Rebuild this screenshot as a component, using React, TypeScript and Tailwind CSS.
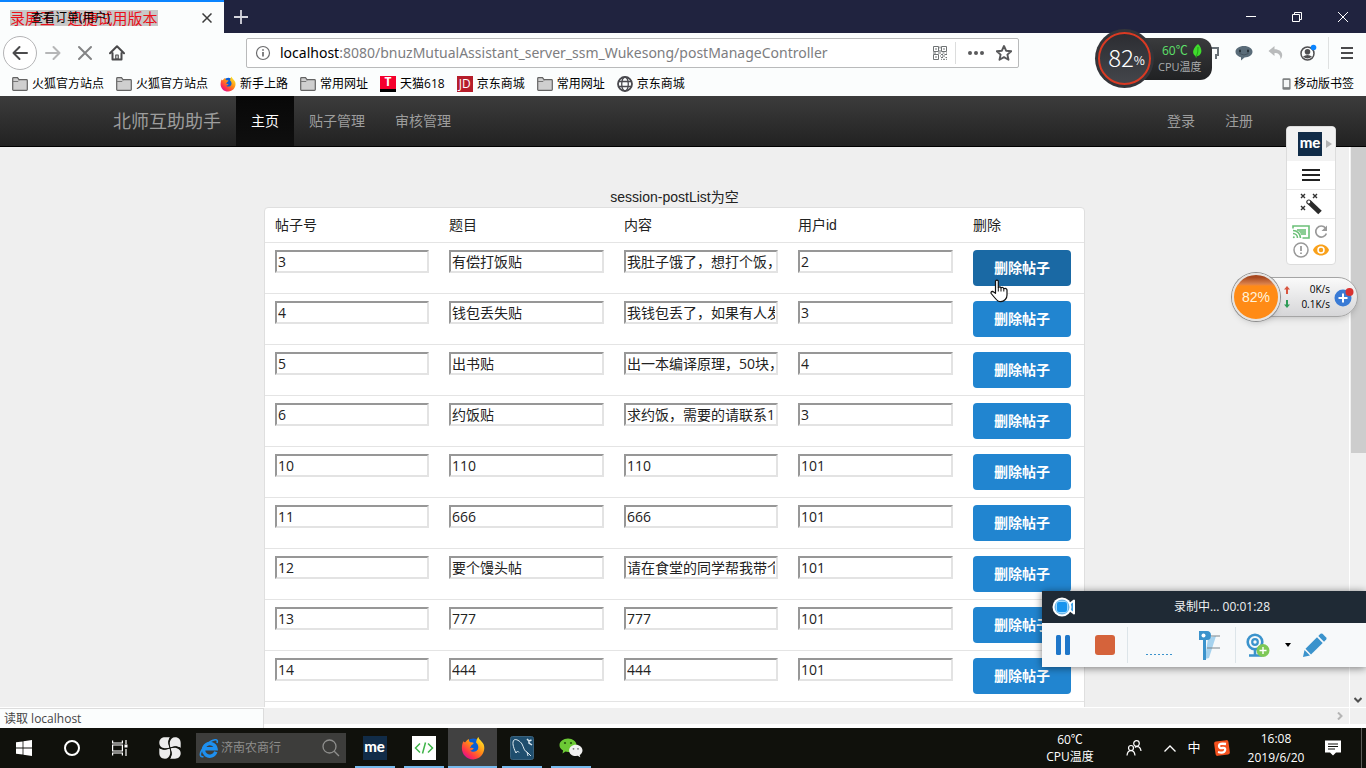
import type { ReactNode } from "react";

type Post = {
  id: string;
  title: string;
  content: string;
  userId: string;
};

const posts: Post[] = [
  { id: "3", title: "有偿打饭贴", content: "我肚子饿了，想打个饭，", userId: "2" },
  { id: "4", title: "钱包丢失贴", content: "我钱包丢了，如果有人发", userId: "3" },
  { id: "5", title: "出书贴", content: "出一本编译原理，50块，", userId: "4" },
  { id: "6", title: "约饭贴", content: "求约饭，需要的请联系1", userId: "3" },
  { id: "10", title: "110", content: "110", userId: "101" },
  { id: "11", title: "666", content: "666", userId: "101" },
  { id: "12", title: "要个馒头帖", content: "请在食堂的同学帮我带个", userId: "101" },
  { id: "13", title: "777", content: "777", userId: "101" },
  { id: "14", title: "444", content: "444", userId: "101" },
];

const bookmarks = [
  { icon: "folder", label: "火狐官方站点" },
  { icon: "folder", label: "火狐官方站点" },
  { icon: "firefox", label: "新手上路" },
  { icon: "folder", label: "常用网址" },
  { icon: "tmall", label: "天猫618" },
  { icon: "jd", label: "京东商城" },
  { icon: "folder", label: "常用网址" },
  { icon: "globe", label: "京东商城" },
];

function FirefoxIcon({ className }: { className: string }) {
  return (
    <svg viewBox="0 0 24 24" className={className} aria-hidden>
      <defs>
        <linearGradient id="fox" x1="0.85" y1="0.1" x2="0.2" y2="0.9">
          <stop offset="0" stopColor="#ffe226" />
          <stop offset="0.45" stopColor="#ff8a16" />
          <stop offset="0.8" stopColor="#ff3647" />
          <stop offset="1" stopColor="#e31587" />
        </linearGradient>
      </defs>
      <circle cx="12.5" cy="11" r="8.5" fill="#0a5fd6" />
      <path
        d="M2.3 5.2C3 6 3.600 6.200 4.300 6.300C5.200 4.600 6.600 3.600 8 3C7.700 4.400 8.300 5.700 9.500 6.300C10.800 6.500 12 6.400 12.600 6.900C12.700 8 11.300 8.600 10.300 9.200C10.300 10.500 9.200 10.800 8.700 12.200C10.300 11.400 12 11.800 13 12.800C11.600 13 11.200 14.800 9.200 14.600C11.500 17 17 16 17.300 11.500C17.400 9.500 16.400 7.700 15 6.600C15.300 4.300 16.300 2.300 17.500 0.800C17.300 3.200 21 5 22.700 8.600C25 15 20.500 23.400 12.300 23.400C5.500 23.400 0.800 18 0.900 12C0.900 9.300 1.500 7 2.300 5.200Z"
        fill="url(#fox)"
      />
    </svg>
  );
}

function MeLogo() {
  return (
    <span className="flex size-6 items-center justify-center bg-[#112c48] pb-1 font-[Lato,sans-serif] text-[15px] leading-none font-black text-white">
      me
    </span>
  );
}

function BookmarkIcon({ name }: { name: string }) {
  if (name === "firefox") return <FirefoxIcon className="size-4" />;
  if (name === "tmall") {
    return (
      <span className="flex size-4 items-center justify-center border-b-3 border-black bg-[#f5002d] text-xs leading-none font-bold text-white">
        T
      </span>
    );
  }
  if (name === "jd") {
    return (
      <span className="flex size-4 items-center justify-center bg-[#b61d2a] text-xs leading-none text-white">
        JD
      </span>
    );
  }
  if (name === "globe") {
    return (
      <svg viewBox="0 0 16 16" className="size-4" fill="none" stroke="#4a4a4f" strokeWidth="1.3" aria-hidden>
        <circle cx="8" cy="8" r="7" strokeWidth="1.8" />
        <ellipse cx="8" cy="8" rx="3.300" ry="7" />
        <path d="M1.500 5.500h13M1.500 10.500h13" />
      </svg>
    );
  }
  return (
    <svg viewBox="0 0 16 16" className="size-4" aria-hidden>
      <path
        d="M0.700 13.500V2.500Q0.700 1.700 1.500 1.700H5.500L7 3.700H14.500Q15.300 3.700 15.300 4.500V13.500Q15.300 14.300 14.500 14.300H1.500Q0.700 14.300 0.700 13.500Z"
        fill="#cfcfcf"
        stroke="#636363"
        strokeWidth="1.200"
      />
      <path d="M1 5.500H6L7 4.500" stroke="#777" fill="none" />
    </svg>
  );
}

function TitleBar() {
  return (
    <header className="flex h-[33px] shrink-0 bg-[#20233f]">
      <div className="relative flex w-56 items-center border-t-2 border-[#0a84ff] bg-[#fbfdfd] text-xs">
        <span className="absolute top-2 left-2.5 bg-[#c8c8c8] text-[15px] leading-4 whitespace-nowrap text-[#e8101a]">
          录屏王 - 迅捷试用版本
        </span>
        <span className="relative ml-[31px] text-black">查看订单(用户)</span>
        <button aria-label="关闭标签页" className="mr-3 ml-auto">
          <svg viewBox="0 0 10 10" className="size-2.5" stroke="#3c3c3c" strokeWidth="1.500" aria-hidden>
            <path d="M0.500 0.500L9.500 9.500M9.500 0.500L0.500 9.500" />
          </svg>
        </button>
      </div>
      <button aria-label="新标签页" className="ml-2.5">
        <svg viewBox="0 0 14 14" className="size-3.5" stroke="#d5d6de" strokeWidth="1.800" aria-hidden>
          <path d="M7 0V14M0 7H14" />
        </svg>
      </button>
      <div className="ml-auto flex">
        <button aria-label="最小化" className="flex w-[46px] items-center justify-center">
          <svg viewBox="0 0 10 10" className="size-2.5" stroke="#fff" aria-hidden>
            <path d="M0 4.500H10" />
          </svg>
        </button>
        <button aria-label="还原" className="flex w-[46px] items-center justify-center">
          <svg viewBox="0 0 10 10" className="size-2.5" fill="none" stroke="#fff" aria-hidden>
            <path d="M0.500 2.500H7.500V9.500H0.500ZM2.500 2.500V0.500H9.500V7.500H7.500" />
          </svg>
        </button>
        <button aria-label="关闭" className="flex w-[46px] items-center justify-center">
          <svg viewBox="0 0 10 10" className="size-2.5" stroke="#fff" aria-hidden>
            <path d="M0 0L10 10M10 0L0 10" />
          </svg>
        </button>
      </div>
    </header>
  );
}

function ToolButton({ label, children }: { label: string; children: ReactNode }) {
  return (
    <button aria-label={label} className="flex h-8 w-8 shrink-0 items-center justify-center">
      {children}
    </button>
  );
}

function Toolbar() {
  return (
    <div className="flex h-10 shrink-0 items-center bg-[#fbfdfd]">
      <button
        aria-label="后退"
        className="ml-[3px] flex size-[34px] items-center justify-center rounded-full border border-[#b4b4b6] bg-white"
      >
        <svg viewBox="0 0 16 16" className="size-4" fill="none" stroke="#4a4a4c" strokeWidth="2" strokeLinecap="round" strokeLinejoin="round" aria-hidden>
          <path d="M15 8H1.500M7.500 2L1.500 8L7.500 14" />
        </svg>
      </button>
      <ToolButton label="前进">
        <svg viewBox="0 0 16 16" className="size-4" fill="none" stroke="#b5b6b7" strokeWidth="2" strokeLinecap="round" strokeLinejoin="round" aria-hidden>
          <path d="M1 8H14.500M8.500 2L14.500 8L8.500 14" />
        </svg>
      </ToolButton>
      <ToolButton label="停止">
        <svg viewBox="0 0 16 16" className="size-4" fill="none" stroke="#838485" strokeWidth="2" strokeLinecap="round" aria-hidden>
          <path d="M2 2L14 14M14 2L2 14" />
        </svg>
      </ToolButton>
      <ToolButton label="主页">
        <svg viewBox="0 0 16 16" className="size-4" fill="none" stroke="#4a4a4c" strokeWidth="2" strokeLinecap="round" strokeLinejoin="round" aria-hidden>
          <path d="M1 8.300L8 1.300L15 8.300M3.500 8V14.500H12.500V8" />
          <path d="M6.800 14V10H9.200V14Z" strokeWidth="1.200" />
        </svg>
      </ToolButton>
      <div className="mr-[177px] ml-[113px] flex h-[30px] min-w-0 flex-1 items-center rounded-[2px] border border-[#b9babb] bg-white">
        <svg viewBox="0 0 16 16" className="ml-2 size-4 shrink-0" fill="none" stroke="#6b6b6d" strokeWidth="1.200" aria-hidden>
          <circle cx="8" cy="8" r="6.500" />
          <path d="M8 7V11.500M8 4.300V5.800" strokeWidth="1.700" />
        </svg>
        <p className="ml-[9px] truncate font-['Noto_Sans',sans-serif] text-sm text-[#7d7d7f]">
          <span className="text-black">localhost</span>
          :8080/bnuzMutualAssistant_server_ssm_Wukesong/postManageController
        </p>
        <svg viewBox="0 0 14 14" className="ml-auto size-3.5 shrink-0" fill="none" stroke="#6f7374" aria-hidden>
          <path d="M0.500 0.500h5v5h-5zM8.500 0.500h5v5h-5zM0.500 8.500h5v5h-5z" />
          <path d="M2 3h2M10 3h2M2 11h2M7 0.500v2M7 4v2M0 7h3M5 7h3M9.500 7h2M13 7h1M8 8.500h2M11.500 8.500h2.500M9 10h3M8 11.500h2M12.500 11.500h1.500M10 13.300h2M13 13.300h1M7.500 9.500v1M8 13.300h1" />
        </svg>
        <span className="ml-2 h-[22px] w-px bg-[#dcdddd]" />
        <button aria-label="页面操作" className="ml-3 shrink-0">
          <svg viewBox="0 0 16 4" className="h-1 w-4" fill="#5a5a5c" aria-hidden>
            <circle cx="2" cy="2" r="2" />
            <circle cx="8" cy="2" r="2" />
            <circle cx="14" cy="2" r="2" />
          </svg>
        </button>
        <button aria-label="为此页添加书签" className="mr-1.5 ml-3 shrink-0">
          <svg viewBox="0 0 16 16" className="size-4" fill="none" stroke="#58585a" strokeWidth="1.900" strokeLinejoin="round" aria-hidden>
            <path d="M8 1L10.100 5.700L15.200 6.200L11.400 9.600L12.500 14.700L8 12.100L3.500 14.700L4.600 9.600L0.800 6.200L5.900 5.700Z" />
          </svg>
        </button>
      </div>
      <ToolButton label="截图">
        <svg viewBox="0 0 16 16" className="size-4" fill="none" stroke="#6a7278" strokeWidth="2" aria-hidden>
          <path d="M4 3H14V10M11 10H15M12 10V14" />
        </svg>
      </ToolButton>
      <ToolButton label="微信">
        <svg viewBox="0 0 18 16" className="h-4 w-[18px]" aria-hidden>
          <path d="M9 1c4.800 0 8.500 2.500 8.500 5.800s-3.500 5.700-8 5.700L6 15.500v-3.200C3 11.500 0.500 9.500 0.500 6.800C0.500 3.500 4.200 1 9 1z" fill="#5a6c79" />
          <path d="M5 5.500v1M13 5.500v1" fill="none" stroke="#27323a" strokeWidth="2" strokeLinecap="round" />
          <path d="M4.500 8.500Q9 11.500 13.500 8.500" fill="none" stroke="#44535e" />
        </svg>
      </ToolButton>
      <ToolButton label="撤销">
        <svg viewBox="0 0 16 16" className="size-4" fill="#b9bbbc" aria-hidden>
          <path d="M6.500 1L0.500 6L6.500 11V8C10.500 8 12.500 9.500 12.500 14.500C16.500 9 13 4.200 6.500 4.200Z" />
        </svg>
      </ToolButton>
      <ToolButton label="账户">
        <svg viewBox="0 0 18 18" className="size-[18px]" aria-hidden>
          <circle cx="8.500" cy="9.500" r="6.500" fill="none" stroke="#4f4f51" strokeWidth="1.500" />
          <circle cx="8.500" cy="7.800" r="2.800" fill="#4f4f51" />
          <path d="M4 12.500Q8.500 9.500 13 12.500Q8.500 16.500 4 12.500Z" fill="#4f4f51" />
          <circle cx="14.500" cy="3.500" r="2.800" fill="#0a84ff" />
        </svg>
      </ToolButton>
      <div className="ml-1 flex h-8 w-[38px] shrink-0 items-center border-l border-[#dfe1e1] pl-3">
        <button aria-label="打开菜单">
          <svg viewBox="0 0 12 12" className="size-3" stroke="#4a4a4c" strokeWidth="2" aria-hidden>
            <path d="M0 1H12M0 6H12M0 11H12" />
          </svg>
        </button>
      </div>
    </div>
  );
}

function BookmarkBar() {
  return (
    <div className="flex h-[23px] shrink-0 items-center gap-3 bg-[#fbfdfd] px-3 pb-0.5 text-xs text-black">
      {bookmarks.map((b, i) => (
        <a key={i} href="#" className="flex shrink-0 items-center gap-1">
          <BookmarkIcon name={b.icon} />
          {b.label}
        </a>
      ))}
      <a href="#" className="ml-auto flex shrink-0 items-center gap-[3px]">
        <svg viewBox="0 0 10 14" className="h-3.5 w-[9px]" aria-hidden>
          <rect x="0.500" y="0.500" width="9" height="13" rx="1.500" fill="#7c7f80" />
          <path d="M2 2.500H8V10.500H2Z" fill="#f4f6f6" />
        </svg>
        移动版书签
      </a>
    </div>
  );
}

function SiteNav() {
  return (
    <nav className="h-[51px] shrink-0 border-b border-black bg-linear-to-b from-[#3c3c3c] to-[#222] text-sm text-[#9d9d9d]">
      <div className="mx-auto flex h-full max-w-[1170px] items-stretch">
        <a href="#" className="flex items-center px-[15px] text-lg">
          北师互助助手
        </a>
        <a href="#" className="flex items-center bg-linear-to-b from-[#080808] to-[#0f0f0f] px-[15px] text-white">
          主页
        </a>
        <a href="#" className="flex items-center px-[15px]">贴子管理</a>
        <a href="#" className="flex items-center px-[15px]">审核管理</a>
        <a href="#" className="ml-auto flex items-center px-[15px]">登录</a>
        <a href="#" className="flex items-center px-[15px]">注册</a>
      </div>
    </nav>
  );
}

function PostInput({ label, value }: { label: string; value: string }) {
  return (
    <input
      type="text"
      aria-label={label}
      defaultValue={value}
      className="block h-[23px] w-full border-2 border-t-[#979797] border-r-[#e3e3e3] border-b-[#e3e3e3] border-l-[#979797] bg-white px-px font-['Open_Sans','Noto_Sans_CJK_SC',sans-serif] text-sm leading-none text-[#222]"
    />
  );
}

function PostTable() {
  return (
    <div className="mx-auto w-full max-w-[821px] rounded border border-[#dfdfdf] bg-white pb-5">
      <table className="w-full table-fixed text-left text-sm text-[#222]">
        <thead>
          <tr className="h-[34px] border-b border-[#e4e4e4]">
            <th className="w-[174px] px-2.5 font-normal">帖子号</th>
            <th className="w-[175px] px-2.5 font-normal">题目</th>
            <th className="w-[174px] px-2.5 font-normal">内容</th>
            <th className="w-[175px] px-2.5 font-normal">用户id</th>
            <th className="px-2.5 font-normal">删除</th>
          </tr>
        </thead>
        <tbody>
          {posts.map((post, i) => (
            <tr key={post.id} className="h-[51px] border-b border-[#e4e4e4] align-top">
              <td className="px-2.5 py-[7px]">
                <PostInput label="帖子号" value={post.id} />
              </td>
              <td className="px-2.5 py-[7px]">
                <PostInput label="题目" value={post.title} />
              </td>
              <td className="px-2.5 py-[7px]">
                <PostInput label="内容" value={post.content} />
              </td>
              <td className="px-2.5 py-[7px]">
                <PostInput label="用户id" value={post.userId} />
              </td>
              <td className="px-2.5 py-[7px]">
                <button
                  className={
                    i === 0
                      ? "block h-9 w-[98px] rounded bg-[#1a69a4] font-bold text-white"
                      : "block h-9 w-[98px] rounded bg-[#2185d0] font-bold text-white"
                  }
                >
                  删除帖子
                </button>
              </td>
            </tr>
          ))}
        </tbody>
      </table>
    </div>
  );
}

function CpuWidget() {
  return (
    <div className="absolute top-[29px] right-[154px] flex items-center">
      <div className="z-10 flex size-[59px] items-center justify-center rounded-full bg-[#34353a]">
        <div className="flex size-[53px] items-center justify-center rounded-full border-2 border-[#d93a23] bg-linear-to-b from-[#2c2d32] to-[#44464b] pb-1 pl-1 font-['Noto_Sans_CJK_SC',sans-serif] text-white">
          <span className="text-2xl leading-none font-light">82</span>
          <span className="mt-1.5 text-xs leading-none">%</span>
        </div>
      </div>
      <div className="-ml-7 flex h-[42px] w-[86px] flex-col justify-center rounded-r-xl bg-linear-to-b from-[#3a3b3d] to-[#202123] pl-8 text-[11px] leading-4">
        <span className="flex items-center gap-1 pl-1 text-xs leading-4 text-[#5ee06a]">
          60℃
          <svg viewBox="0 0 10 14" className="h-3.5 w-2.5" aria-hidden>
            <path d="M6 0C9 3 10.500 7 8.500 10Q7.500 12 5 12.300L4 14L3.500 12C0 10 0 5 6 0Z" fill="#3fdd2c" />
            <path d="M6 3Q6.500 8 4.200 13" fill="none" stroke="#1d8a17" strokeWidth="0.800" />
          </svg>
        </span>
        <span className="whitespace-nowrap text-[#a9abad]">CPU温度</span>
      </div>
    </div>
  );
}

function SidePanel() {
  return (
    <aside className="absolute top-[126px] right-[30px] w-[50px] overflow-hidden rounded border border-[#dcdcdc] bg-white">
      <div className="flex h-[34px] items-center bg-[#f2f2f2] pl-[11px]">
        <MeLogo />
        <svg viewBox="0 0 6 8" className="ml-1 h-2 w-1.5" fill="#b3b3b3" aria-hidden>
          <path d="M0 0L6 4L0 8Z" />
        </svg>
      </div>
      <button aria-label="菜单" className="flex h-[29px] w-full items-center justify-center border-b border-[#e8e8e8]">
        <svg viewBox="0 0 18 12" className="h-3 w-[18px]" stroke="#222" strokeWidth="2" aria-hidden>
          <path d="M0 1H18M0 6H18M0 11H18" />
        </svg>
      </button>
      <button aria-label="魔棒" className="flex h-[29px] w-full items-center justify-center border-b border-[#e8e8e8]">
        <svg viewBox="0 0 22 22" className="size-[22px]" fill="none" stroke="#333" aria-hidden>
          <path d="M1 1L5 5M5 1L1 5M13 1L17 5M17 1L13 5M1 13L5 17M5 13L1 17" strokeWidth="1.400" />
          <path d="M9.500 9.500L20 19.500" stroke="#2b2b2b" strokeWidth="5" />
          <circle cx="8.800" cy="9" r="2" fill="#fff" strokeWidth="1.200" />
        </svg>
      </button>
      <div className="grid h-[45px] grid-cols-2 place-items-center px-1 py-1">
        <svg viewBox="0 0 18 14" className="h-3.5 w-[18px]" fill="none" stroke="#6cc078" strokeWidth="1.600" aria-hidden>
          <path d="M5 4H14V10H9Q8 6 5 6Z" fill="#8acd93" stroke="none" />
          <path d="M1 3.500V1H17V13H10.500M1 5.500A7.500 7.500 0 0 1 8.500 13M1 8.500A4.500 4.500 0 0 1 5.500 13" />
          <circle cx="1.800" cy="12.200" r="1" fill="#6cc078" stroke="none" />
        </svg>
        <svg viewBox="0 0 14 14" className="size-3.5" fill="none" stroke="#999" strokeWidth="1.700" aria-hidden>
          <path d="M11.500 3A5.500 5.500 0 1 0 12.400 8.500" />
          <path d="M13 0.500V6H7.500Z" fill="#999" stroke="none" />
        </svg>
        <svg viewBox="0 0 16 16" className="size-4" fill="none" stroke="#999" strokeWidth="1.500" aria-hidden>
          <circle cx="8" cy="8" r="7" />
          <path d="M8 4V9M8 10.500V12" strokeWidth="1.800" />
        </svg>
        <svg viewBox="0 0 16 12" className="h-3 w-4" aria-hidden>
          <path d="M8 0.500C12 0.500 15 3 16 6C15 9 12 11.500 8 11.500S1 9 0 6C1 3 4 0.500 8 0.500Z" fill="#f9a11b" />
          <circle cx="8" cy="6" r="3" fill="#f9a11b" stroke="#fff" strokeWidth="1.500" />
        </svg>
      </div>
    </aside>
  );
}

function NetWidget() {
  return (
    <div className="absolute top-[273px] right-2 flex items-center font-['Open_Sans',sans-serif]">
      <div className="z-10 flex size-12 items-center justify-center rounded-full border-2 border-[#e6e4e2] bg-linear-to-b from-[#a8481f] from-5% via-[#d9804a] via-20% to-[#ff8b16] to-25% font-['Liberation_Sans',sans-serif] text-sm text-[#fff3dc] shadow-md ring-1 ring-[#8d8d8d]">
        82%
      </div>
      <div className="-ml-6 flex h-10 w-[102px] items-center rounded-r-full border border-[#a5a5a5] bg-linear-to-b from-[#fafafa] to-[#d6d6d8] pl-[27px] text-[10px] leading-[15px] text-black shadow-md">
        <svg viewBox="0 0 6 24" className="h-6 w-1.5" aria-hidden>
          <path d="M3 1L6 4.500H4V9H2V4.500H0Z" fill="#d9553f" />
          <path d="M3 23L6 19.500H4V15H2V19.500H0Z" fill="#2e9b57" />
        </svg>
        <p className="w-10 text-right">
          0K/s
          <br />
          0.1K/s
        </p>
        <svg viewBox="0 0 20 20" className="ml-1 size-5 shrink-0" aria-hidden>
          <circle cx="9" cy="11" r="8.500" fill="#3a7bd5" />
          <path d="M9 6.500V15.500M4.500 11H13.500" stroke="#fff" strokeWidth="2" />
          <circle cx="15.500" cy="5" r="4" fill="#d83232" />
        </svg>
      </div>
    </div>
  );
}

function Recorder() {
  return (
    <section className="absolute right-0 bottom-[101px] w-[324px] shadow-[0_1px_8px_rgba(0,0,0,0.5)]">
      <div className="relative flex h-8 items-center justify-center bg-[#1f2a35] pl-9 text-xs text-[#f0f2f3]">
        <svg viewBox="0 0 24 20" className="absolute left-2.5 h-5 w-6" aria-hidden>
          <path d="M16 8L22 3.500V16.500L16 12Z" fill="#3ea2e8" stroke="#fff" strokeWidth="2" strokeLinejoin="round" />
          <circle cx="10" cy="10" r="9.500" fill="#fff" />
          <circle cx="10" cy="10" r="7.500" fill="#6fb6e6" />
          <rect x="4.500" y="4.500" width="11" height="11" rx="2.500" fill="#1794ee" stroke="#9bd9ff" />
        </svg>
        录制中... 00:01:28
      </div>
      <div className="flex h-11 items-center bg-[#f7f9fa]">
        <button aria-label="暂停" className="ml-3.5">
          <svg viewBox="0 0 14 20" className="h-5 w-3.5" fill="#1f77c9" aria-hidden>
            <rect width="5" height="20" rx="1.500" />
            <rect x="9" width="5" height="20" rx="1.500" />
          </svg>
        </button>
        <button aria-label="停止录制" className="ml-[25px] size-5 rounded-[3px] bg-[#d5633b]" />
        <span className="ml-3 h-9 w-px bg-[#dde5e9]" />
        <svg viewBox="0 0 26 20" className="ml-[18px] h-5 w-[26px]" stroke="#3b93cc" aria-hidden>
          <path d="M0 19.500H26" strokeDasharray="2 2" />
        </svg>
        <svg viewBox="0 0 22 30" className="ml-[27px] h-[30px] w-[22px]" aria-hidden>
          <path d="M9 8L17 6L10 28L6 29Z" fill="#a5d2ee" />
          <path d="M4 8H7V30H4Z" fill="#3b93cc" />
          <path d="M0 1H8Q12 1 12 5.500T8 10H0Z" fill="#3b93cc" />
          <circle cx="4.500" cy="5.500" r="2" fill="#fff" />
          <path d="M12 6H21M8 18H21" stroke="#7a858c" />
        </svg>
        <span className="ml-[14px] h-9 w-px bg-[#dde5e9]" />
        <svg viewBox="0 0 24 24" className="ml-2.5 size-6" fill="none" aria-hidden>
          <circle cx="9" cy="9" r="7.300" stroke="#3b93cc" strokeWidth="2.600" />
          <circle cx="9" cy="9" r="2.800" stroke="#3b93cc" strokeWidth="2.200" />
          <path d="M3 22.500H16M9 17V22" stroke="#3b93cc" strokeWidth="2.600" />
          <circle cx="17" cy="17.500" r="6.500" fill="#7dc855" />
          <path d="M17 14V21M13.500 17.500H20.500" stroke="#fff" strokeWidth="1.400" />
        </svg>
        <svg viewBox="0 0 6 4" className="ml-[15px] h-1 w-1.5" aria-hidden>
          <path d="M0 0H6L3 4Z" />
        </svg>
        <button aria-label="画笔" className="ml-3">
          <svg viewBox="0 0 24 24" className="size-6" fill="#3b93cc" aria-hidden>
            <path d="M17.500 0.800Q18.500 0 19.500 0.800L23.200 4.500Q24 5.500 23.200 6.500L21 8.700L15.300 3Z" />
            <path d="M14 4.300L19.700 10L8 21.500L2.500 15.800Z" />
            <path d="M1.500 17L7 22.500L0 24Z" />
          </svg>
        </button>
      </div>
    </section>
  );
}

function HandCursor() {
  return (
    <svg viewBox="0 0 18 24" className="absolute top-[279px] left-[990px] h-6 w-[18px]" aria-hidden>
      <path
        d="M5.500 1.800Q7 0.300 8.300 1.800V8.500Q10 7.200 11 8.800Q13 7.800 13.800 9.700Q16.500 8.800 17 11V16Q17 19 15.300 20.500Q12 24 8 22Q6 20.500 1.200 14.500Q0.500 12.500 2.500 12.300L5.500 14.300Z"
        fill="#fff"
        stroke="#111"
        strokeWidth="1.200"
        strokeLinejoin="round"
      />
      <path d="M8.300 8.500V12.500M11 9V12.500M13.800 10V12.500" stroke="#111" />
    </svg>
  );
}

function TaskButton({ label, active, children }: { label: string; active?: boolean; children: ReactNode }) {
  return (
    <button
      aria-label={label}
      className={
        active
          ? "flex w-[49px] flex-col items-center bg-[#414141]"
          : "flex w-[49px] flex-col items-center"
      }
    >
      <span className="flex flex-1 items-center pt-0.5">{children}</span>
      <span className={active ? "h-0.5 w-full bg-[#76b9ed]" : "h-0.5 w-10 bg-[#76b9ed]"} />
    </button>
  );
}

function Taskbar() {
  return (
    <footer className="flex h-10 shrink-0 items-stretch bg-[#10110c] text-xs text-white">
      <button aria-label="开始" className="flex w-12 items-center justify-center">
        <svg viewBox="0 0 16 16" className="size-4" fill="#fff" aria-hidden>
          <path d="M0 2.300L6.600 1.400V7.600H0ZM7.400 1.300L16 0V7.600H7.400ZM0 8.400H6.600V14.600L0 13.700ZM7.400 8.400H16V16L7.400 14.700Z" />
        </svg>
      </button>
      <button aria-label="Cortana" className="flex w-12 items-center justify-center">
        <span className="size-4 rounded-full border-2 border-white" />
      </button>
      <button aria-label="任务视图" className="flex w-12 items-center justify-center">
        <svg viewBox="0 0 16 16" className="size-4" fill="none" stroke="#fff" strokeWidth="1.200" aria-hidden>
          <path d="M0.600 0.500V3H10.400V0.500M0.600 15.500V13H10.400V15.500M0.600 5H10.400V11H0.600ZM14 0V4M14 9V16" />
          <path d="M12.500 4.500H15.500V7.500H12.500Z" fill="#fff" stroke="none" />
        </svg>
      </button>
      <button aria-label="搜狗" className="flex w-[52px] items-center justify-center">
        <svg viewBox="0 0 22 22" className="size-[22px]" fill="#ececec" aria-hidden>
          <path d="M10.800 10.800C7 12 0.500 11.500 0.300 6C0.300 2 3 0.300 6 0.300H11Q8 5 10.800 10.800Z" />
          <path d="M11.200 10.800C10 7 10.500 0.500 16 0.300C20 0.300 21.700 3 21.700 6V11Q17 8 11.200 10.800Z" />
          <path d="M11.200 11.200C15 10 21.500 10.500 21.700 16C21.700 20 19 21.700 16 21.700H11Q14 17 11.200 11.200Z" />
          <path d="M10.800 11.200C12 15 11.500 21.500 6 21.700C2 21.700 0.300 19 0.300 16V11Q5 14 10.800 11.200Z" />
          <path d="M11 0.500Q8 5 11 11Q14 17 11 21.500M0.500 11Q5 14 11 11Q17 8 21.500 11" fill="none" stroke="#10110c" />
        </svg>
      </button>
      <label className="mt-[5px] mb-[5px] flex w-[150px] items-center bg-[#3d3d3b] px-1">
        <svg viewBox="0 0 20 20" className="-ml-px size-5 shrink-0" fill="none" aria-hidden>
          <path d="M16.800 13.800A6.300 6.300 0 1 1 17 10.800H6" stroke="#1e90f0" strokeWidth="3.400" />
          <path d="M4.500 18.500C-1 20 1 12 8 6C14 1 20 0 18 5" stroke="#1e90f0" strokeWidth="1.600" />
        </svg>
        <input
          type="text"
          aria-label="搜索"
          placeholder="济南农商行"
          className="ml-0.5 w-full min-w-0 text-xs text-white placeholder:text-[#8e8e8c]"
        />
        <svg viewBox="0 0 18 18" className="mr-0.5 size-[18px] shrink-0" fill="none" stroke="#8e8e8c" strokeWidth="1.300" aria-hidden>
          <circle cx="7.500" cy="7.500" r="6.500" />
          <path d="M12.200 12.200L17 17" />
        </svg>
      </label>
      <div className="ml-1 flex">
        <TaskButton label="MyEclipse">
          <MeLogo />
        </TaskButton>
        <TaskButton label="代码编辑器">
          <svg viewBox="0 0 24 24" className="size-6" fill="none" stroke="#3fb449" strokeWidth="1.500" aria-hidden>
            <path d="M0 0H24V24H0Z" fill="#fff" stroke="none" />
            <path d="M8 7.500L3.500 12L8 16.500M16 7.500L20.500 12L16 16.500M13.500 6.500L10.500 17.500" />
          </svg>
        </TaskButton>
        <TaskButton label="Firefox" active>
          <FirefoxIcon className="size-6" />
        </TaskButton>
        <TaskButton label="MySQL Workbench">
          <svg viewBox="0 0 24 24" className="size-6" fill="none" stroke="#dce8ef" aria-hidden>
            <rect x="0.500" y="0.500" width="23" height="23" rx="2" fill="#1f4e6e" stroke="#39617c" />
            <path d="M6 17C3 11 2 6 4 4C6 2.500 10 5 12 8C14 12 14 15 17 16L21 20M6 17L7.500 15L9 16.500M17 16L18 20" />
            <path d="M17 3L19 5L21.500 4M19 5V7L22 9" strokeWidth="1.500" />
          </svg>
        </TaskButton>
        <TaskButton label="微信">
          <svg viewBox="0 0 24 20" className="h-5 w-6" aria-hidden>
            <path d="M9 0.500c4.700 0 8.500 3 8.500 6.700s-3.800 6.800-8.500 6.800l-2.500-.4L3.500 15.500l.6-2.900C2 11.300 0.500 9.500 0.500 7.200 0.500 3.500 4.300 0.500 9 0.500z" fill="#6cc935" />
            <circle cx="6" cy="5" r="1.100" fill="#23530e" />
            <circle cx="12" cy="5" r="1.100" fill="#23530e" />
            <path d="M16.800 6.800c3.700 0 6.700 2.500 6.700 5.600 0 1.900-1.100 3.500-2.800 4.500l.6 2.400-2.600-1.500-1.900.2c-3.700 0-6.700-2.500-6.700-5.600s3-5.600 6.700-5.600z" fill="#f1f1f1" />
            <circle cx="14.500" cy="10.800" r="0.900" fill="#777" />
            <circle cx="19" cy="10.800" r="0.900" fill="#777" />
          </svg>
        </TaskButton>
      </div>
      <div className="ml-auto flex items-center">
        <p className="w-[60px] text-center leading-[17px]">
          60℃
          <br />
          CPU温度
        </p>
        <button aria-label="人脉" className="ml-2.5 flex w-12 justify-center">
          <svg viewBox="0 0 16 16" className="size-4" fill="none" stroke="#fff" strokeWidth="1.200" aria-hidden>
            <circle cx="10.500" cy="3.500" r="2.800" />
            <circle cx="5" cy="8" r="2.500" />
            <path d="M1 15.500Q1.500 10.700 5 10.700T9 15.500M9 7.500Q10 6.300 11 6.300Q14.500 6.500 15 11" />
          </svg>
        </button>
        <button aria-label="显示隐藏的图标" className="flex w-6 justify-center">
          <svg viewBox="0 0 12 7" className="h-[7px] w-3" fill="none" stroke="#fff" strokeWidth="1.300" aria-hidden>
            <path d="M0.500 6.500L6 1L11.500 6.500" />
          </svg>
        </button>
        <span className="w-6 text-center text-[13px]">中</span>
        <span className="flex w-8 justify-center">
          <svg viewBox="0 0 16 16" className="size-4" aria-hidden>
            <rect x="0.800" y="0.800" width="14.400" height="14.400" rx="2" fill="#f4511e" transform="rotate(-8 8 8)" />
            <path d="M12 4Q5 3 5 5.800T8.500 8T11 10.500T4 12" fill="none" stroke="#fff" strokeWidth="2.300" />
          </svg>
        </span>
        <p className="ml-0.5 w-[72px] text-center leading-[19px]">
          16:08
          <br />
          2019/6/20
        </p>
        <button aria-label="通知" className="flex w-[42px] justify-center">
          <svg viewBox="0 0 16 16" className="size-4" aria-hidden>
            <path d="M0 0.500H16V12.500H11L8 15.500L5 12.500H0Z" fill="#fff" />
            <path d="M3 4H13M3 6.500H13M3 9H10" stroke="#10110c" />
          </svg>
        </button>
        <span className="ml-[7px] h-10 w-[5px] border-l border-[#5c5d59]" />
      </div>
    </footer>
  );
}

export default function App() {
  return (
    <div className="relative flex h-screen flex-col overflow-hidden bg-white font-['Open_Sans','Noto_Sans_CJK_SC',sans-serif]">
      <TitleBar />
      <Toolbar />
      <BookmarkBar />
      <SiteNav />
      <div className="flex min-h-0 flex-1">
        <main className="flex-1 overflow-hidden bg-[#efefef] pt-10 font-['Liberation_Sans','Noto_Sans_CJK_SC',sans-serif] text-sm text-[#222]">
          <p className="h-5 text-center leading-5">session-postList为空</p>
          <PostTable />
        </main>
        <div className="flex w-[17px] flex-col items-center border-l border-white bg-[#f0f0f0]">
          <div className="h-[306px] w-[15px] bg-[#cdcdcd]" />
          <svg viewBox="0 0 8 6" className="mt-auto mb-1 h-1.5 w-2" fill="none" stroke="#505050" strokeWidth="2" aria-hidden>
            <path d="M0.500 1L4 4.500L7.500 1" />
          </svg>
        </div>
      </div>
      <div className="flex h-[21px] shrink-0 border-t border-white pb-1">
        <div className="flex flex-1 items-center justify-end bg-[#f0f0f0] pr-1.5">
          <svg viewBox="0 0 6 8" className="h-2 w-1.5" fill="none" stroke="#b5b5b5" strokeWidth="2" aria-hidden>
            <path d="M1 0.500L4.500 4L1 7.500" />
          </svg>
        </div>
        <div className="w-[17px] border-l border-white bg-[#f0f0f0]" />
      </div>
      <Taskbar />

      <div className="absolute bottom-10 left-0 flex h-5 w-[264px] items-center border-t border-r border-[#dcdcdc] bg-[#fbfdfd] pl-1 text-xs text-[#444]">
        读取 localhost
      </div>
      <CpuWidget />
      <SidePanel />
      <NetWidget />
      <Recorder />
      <HandCursor />
    </div>
  );
}
